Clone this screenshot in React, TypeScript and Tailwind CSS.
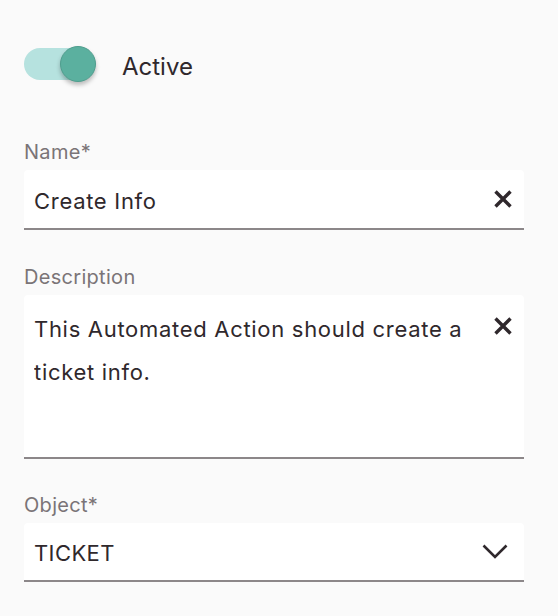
import { useState } from "react"

const font = { fontFamily: "Inter, 'Noto Sans', sans-serif" }

function CloseIcon() {
  return (
    <svg width="20" height="20" viewBox="0 0 20 20" className="shrink-0">
      <path d="M2.5 2.5 L17.5 17.5 M17.5 2.5 L2.5 17.5" stroke="#2f282c" strokeWidth="3.4" strokeLinecap="butt" fill="none" />
    </svg>
  )
}

function ChevronIcon() {
  return (
    <svg width="26" height="15" viewBox="0 0 26 15" className="shrink-0">
      <path d="M1.5 1.5 L13 13 L24.5 1.5" stroke="#2f282c" strokeWidth="2.6" fill="none" />
    </svg>
  )
}

function Label({ children }: { children: React.ReactNode }) {
  return (
    <p className="text-[20px] leading-[24px] tracking-[0.3px] text-[#7a7477] mb-[6px]">
      {children}
    </p>
  )
}

export default function App() {
  const [active, setActive] = useState(true)
  const [name, setName] = useState("Create Info")
  const [description, setDescription] = useState("This Automated Action should create a ticket info.")

  return (
    <div className="w-[558px] h-[616px] bg-[#fafafa] pl-6 pr-[34px] pt-[45px] text-[#2f282c]" style={font}>
      {/* Переключатель */}
      <div className="flex items-center h-[38px]">
        <button
          type="button"
          className="relative w-[72px] h-[38px] flex items-center"
          onClick={() => setActive(!active)}
        >
          <span className="w-[68px] h-[32px] rounded-full bg-[#b6e2df]"></span>
          <span className="absolute left-[36px] top-[1px] w-[36px] h-[36px] rounded-full bg-[#5bb09f] border border-[#4f9e8e] shadow-[0_3px_4px_rgba(0,0,0,0.25)]"></span>
        </button>
        <span className="ml-[26px] text-[24px] leading-[30px] mt-[5px]">Active</span>
      </div>

      <div className="mt-[57px]">
        <Label>Name*</Label>
        <div className="flex items-center h-[60px] bg-white rounded-t-[4px] border-b-2 border-[#8c8789] pl-[10px] pr-[11px]">
          <input
            className="flex-1 min-w-0 bg-transparent outline-none text-[22px] leading-[30px] tracking-[0.7px] text-[#2f282c] pt-[3px]"
            value={name}
            onChange={(e) => setName(e.target.value)}
          />
          <CloseIcon />
        </div>
      </div>

      <div className="mt-[35px]">
        <Label>Description</Label>
        <div className="flex items-start h-[164px] bg-white rounded-t-[4px] border-b-2 border-[#8c8789] pl-[10px] pr-[11px] pt-[13px]">
          <textarea
            className="flex-1 min-w-0 bg-transparent outline-none resize-none text-[22px] leading-[43px] tracking-[0.7px] text-[#2f282c] h-[140px] pr-6"
            value={description}
            onChange={(e) => setDescription(e.target.value)}
          />
          <div className="pt-[8px]">
            <CloseIcon />
          </div>
        </div>
      </div>

      <div className="mt-[34px]">
        <Label>Object*</Label>
        <div className="flex items-center h-[59px] bg-white rounded-t-[4px] border-b-2 border-[#8c8789] pl-[10px] pr-[16px]">
          <span className="flex-1 text-[22px] leading-[30px] tracking-[0.4px] pt-[2px]">TICKET</span>
          <ChevronIcon />
        </div>
      </div>
    </div>
  )
}
